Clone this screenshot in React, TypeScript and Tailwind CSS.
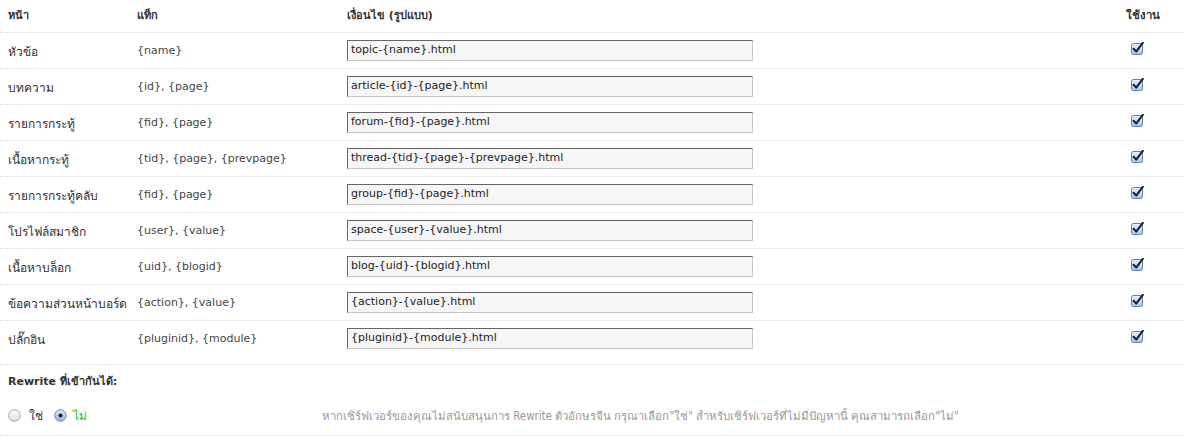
import React from 'react';

interface RuleRow {
  page: string;
  tags: string;
  format: string;
}

const rules: RuleRow[] = [
  { page: 'หัวข้อ', tags: '{name}', format: 'topic-{name}.html' },
  { page: 'บทความ', tags: '{id}, {page}', format: 'article-{id}-{page}.html' },
  { page: 'รายการกระทู้', tags: '{fid}, {page}', format: 'forum-{fid}-{page}.html' },
  { page: 'เนื้อหากระทู้', tags: '{tid}, {page}, {prevpage}', format: 'thread-{tid}-{page}-{prevpage}.html' },
  { page: 'รายการกระทู้คลับ', tags: '{fid}, {page}', format: 'group-{fid}-{page}.html' },
  { page: 'โปรไฟล์สมาชิก', tags: '{user}, {value}', format: 'space-{user}-{value}.html' },
  { page: 'เนื้อหาบล็อก', tags: '{uid}, {blogid}', format: 'blog-{uid}-{blogid}.html' },
  { page: 'ข้อความส่วนหน้าบอร์ด', tags: '{action}, {value}', format: '{action}-{value}.html' },
  { page: 'ปลั๊กอิน', tags: '{pluginid}, {module}', format: '{pluginid}-{module}.html' },
];

const CheckIcon = () => (
  <svg width="14" height="14" viewBox="0 0 14 14" className="ml-[5px] -mt-[3px]">
    <defs>
      <linearGradient id="cb" x1="0" y1="0" x2="0" y2="1">
        <stop offset="0" stopColor="#e8f1fb" />
        <stop offset="1" stopColor="#a9c6ea" />
      </linearGradient>
    </defs>
    <rect x="0.5" y="1.5" width="11" height="11" rx="2" fill="url(#cb)" stroke="#5b7fae" />
    <path d="M2.6 6.8 L5.2 9.6 L11.8 0.8" fill="none" stroke="#15243d" strokeWidth="2.1" strokeLinecap="round" strokeLinejoin="round" />
  </svg>
);

const Radio = ({ checked }: { checked?: boolean }) => (
  <svg width="13" height="13" viewBox="0 0 13 13">
    <defs>
      <linearGradient id="rOff" x1="0" y1="0" x2="0" y2="1">
        <stop offset="0" stopColor="#ffffff" />
        <stop offset="1" stopColor="#dcdcdc" />
      </linearGradient>
      <linearGradient id="rOn" x1="0" y1="0" x2="0" y2="1">
        <stop offset="0" stopColor="#dbe9f9" />
        <stop offset="1" stopColor="#8fb5e6" />
      </linearGradient>
    </defs>
    <circle cx="6.5" cy="6.5" r="5.8" fill={checked ? 'url(#rOn)' : 'url(#rOff)'} stroke={checked ? '#5d80b0' : '#9a9a9a'} strokeWidth="0.9" />
    {checked && <circle cx="6.5" cy="6.5" r="1.9" fill="#1b1b1b" />}
  </svg>
);

const line = 'border-b border-dotted border-[#c4e0f2]';

export default function App() {
  return (
    <div
      className="w-[1184px] h-[444px] bg-white text-[11px] text-[#333] overflow-hidden"
      style={{ fontFamily: '"DejaVu Sans", "Noto Sans", sans-serif' }}
    >
      <div className={`grid grid-cols-[129px_210px_779px_1fr] h-[33px] items-center font-bold ${line}`}>
        <div className="pl-2">หน้า</div>
        <div className="pl-2">แท็ก</div>
        <div className="pl-2">เงื่อนไข (รูปแบบ)</div>
        <div className="pl-2 text-[11.5px]">ใช้งาน</div>
      </div>

      {rules.map((r, i) => (
        <div
          key={i}
          className={`grid grid-cols-[129px_210px_779px_1fr] ${i === rules.length - 1 ? 'h-[44px] pb-[8px]' : 'h-[36px]'} items-center ${line}`}
        >
          <div className="pl-2 text-[12px] pt-[3px]">{r.page}</div>
          <div className="pl-2 text-[#444] pt-[2px]">{r.tags}</div>
          <div className="pl-2">
            <div className="w-[406px] h-[21px] bg-[#f6f6f6] border border-t-[#666] border-l-[#666] border-r-[#c4c4c4] border-b-[#c4c4c4] pl-[3px] flex items-center text-[#222] text-[11px]">
              {r.format}
            </div>
          </div>
          <div className="pl-2 flex items-center">
            <CheckIcon />
          </div>
        </div>
      ))}

      <div className="h-[35px] flex items-center pl-2 font-bold text-[#333]">Rewrite ที่เข้ากันได้:</div>

      <div className={`h-[36px] flex items-center pb-[4px] ${line}`}>
        <div className="w-[322px] pl-2 flex items-center">
          <Radio />
          <span className="ml-[8px] text-[12px]">ใช่</span>
          <span className="ml-[11px] flex"><Radio checked /></span>
          <span className="ml-[6px] text-[12px] text-[#00cc00]">ไม่</span>
        </div>
        <div
          className="text-[#999] text-[11.4px] pt-[2px]"
          style={{ fontFamily: '"DejaVu Sans Condensed", "DejaVu Sans", sans-serif' }}
        >
          หากเซิร์ฟเวอร์ของคุณไม่สนับสนุนการ Rewrite ตัวอักษรจีน กรุณาเลือก"ใช่" สำหรับเซิร์ฟเวอร์ที่ไม่มีปัญหานี้ คุณสามารถเลือก"ไม่"
        </div>
      </div>
    </div>
  );
}
